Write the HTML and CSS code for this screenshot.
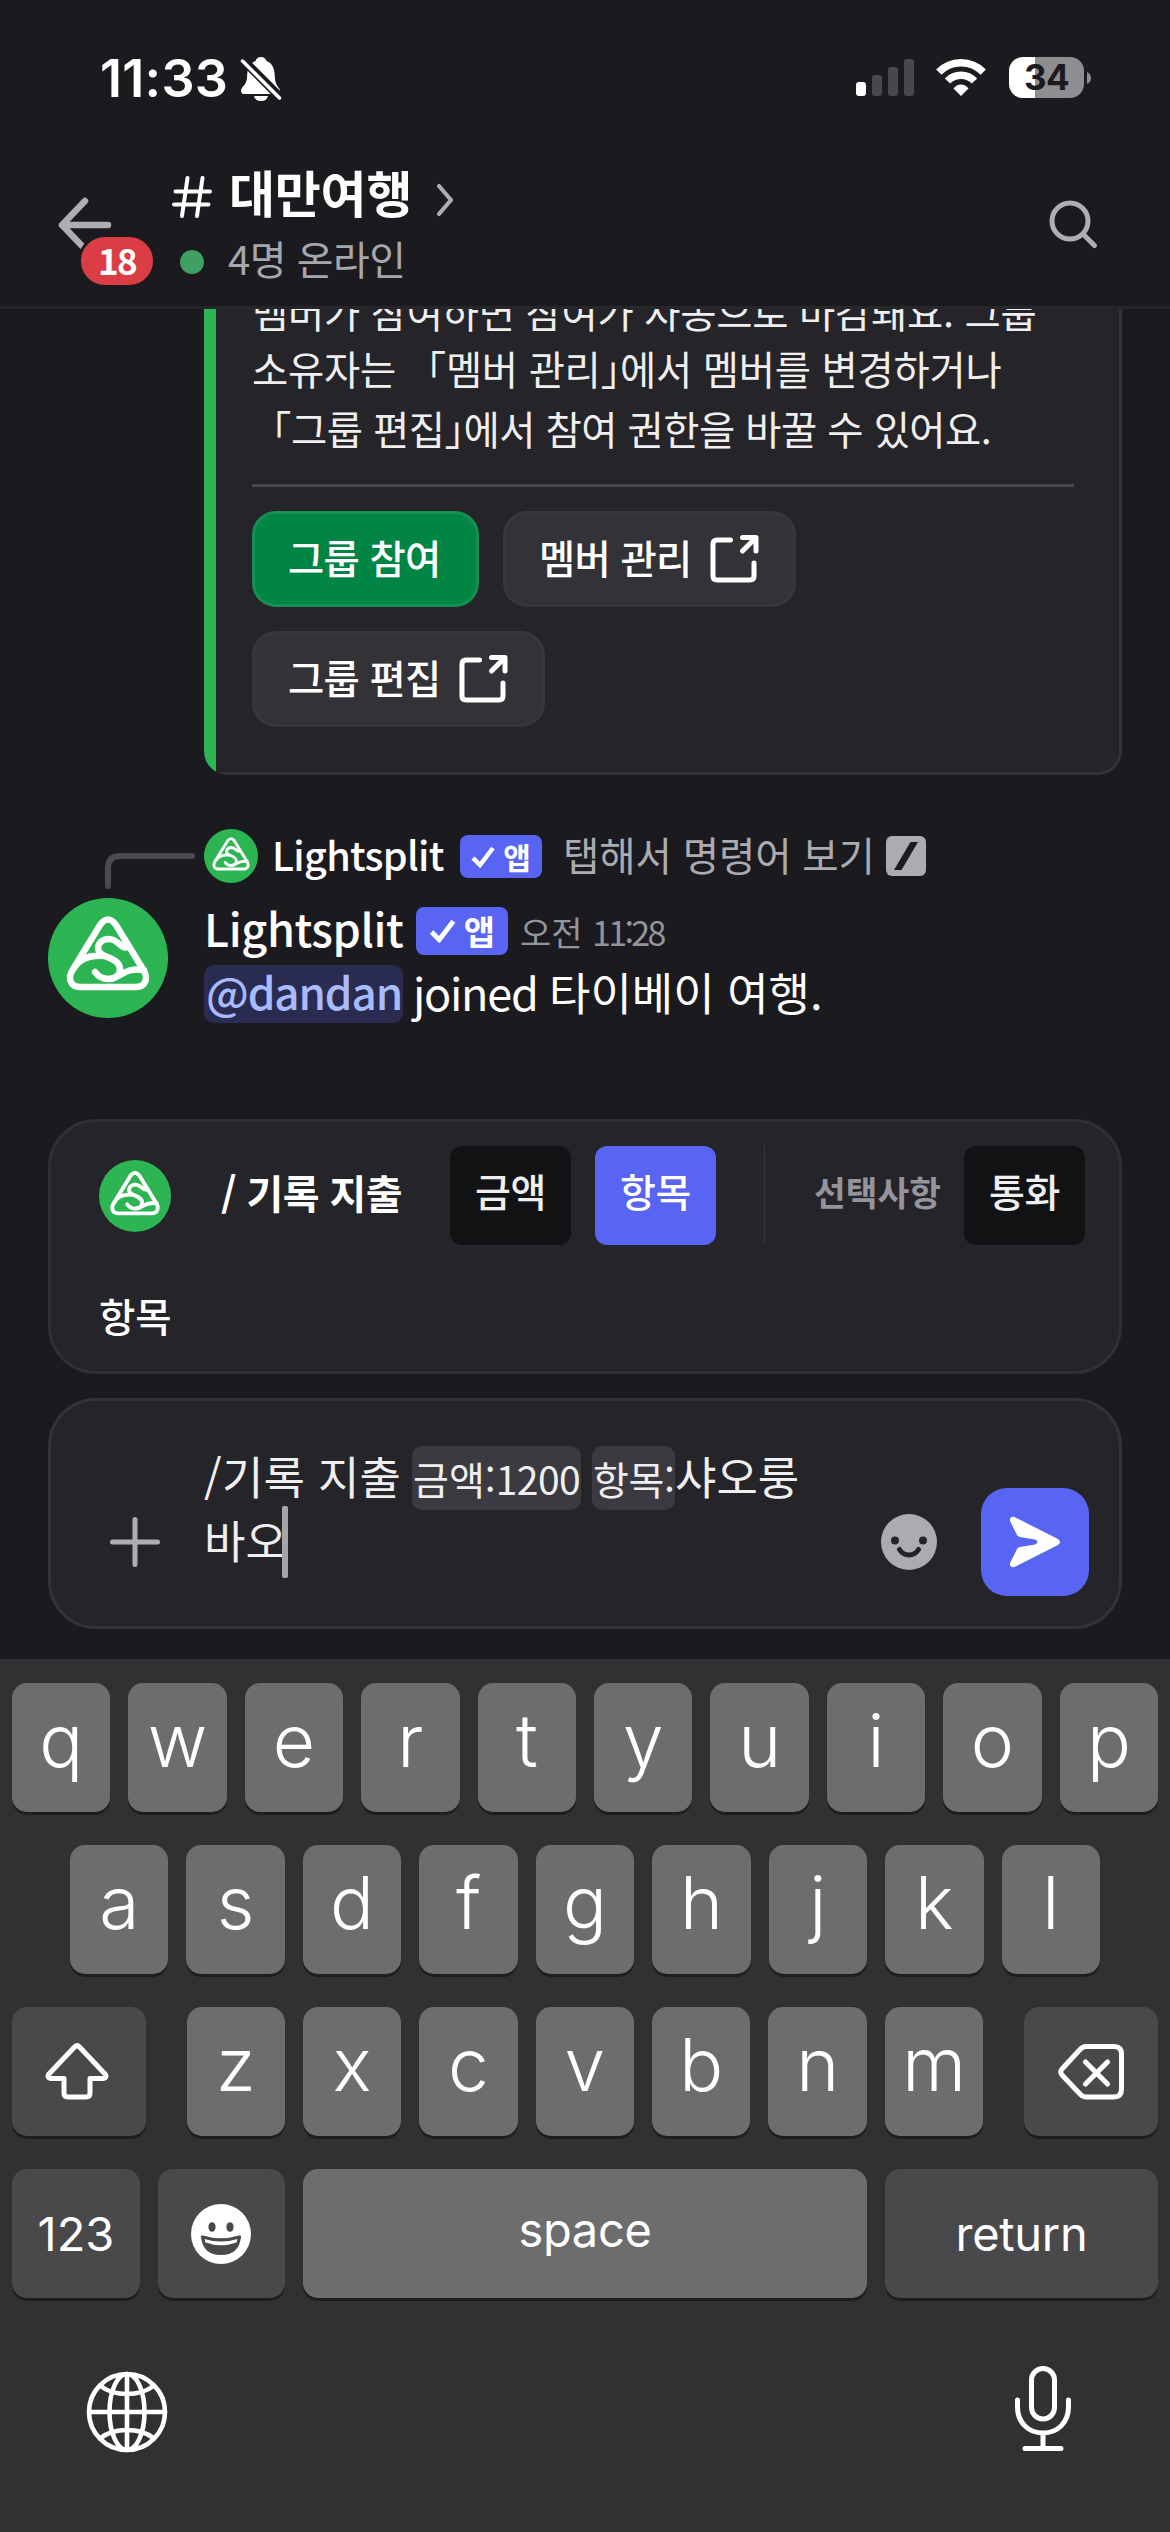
FILE: index.html
```html
<!DOCTYPE html>
<html lang="ko">
<head>
<meta charset="utf-8">
<title>대만여행</title>
<link rel="stylesheet" href="styles.css">
</head>
<body>
<svg class="defs" width="0" height="0">
  <symbol id="logo" viewBox="0 0 120 120">
    <circle cx="60" cy="60" r="60" fill="#2db553"/>
    <g fill="none" stroke="#fff" stroke-width="6.4" stroke-linecap="round" stroke-linejoin="round">
      <path d="M52 27Q60 16 68 27L96 73C101 82 96 89 88 89H32C24 89 19 82 24 73Z"/>
      <path d="M79 49C74 52 70 41 61 41C51 41 46 51 54 56.500C60 60 72 62 72 71C72 78 66 81 60 81C54 81 50 78 47 74"/>
      <path d="M26 70C33 58 45 57 56 58M62 81C73 80 76 69 96 72"/>
    </g>
  </symbol>
  <symbol id="external" viewBox="0 0 48 48">
    <g fill="none" stroke="#fff" stroke-width="5" stroke-linecap="round" stroke-linejoin="round">
      <path d="M20 5H6.500Q2.500 5 2.500 9V41Q2.500 45 6.500 45H39.500Q43.500 45 43.500 41V28"/>
      <path d="M32 2.500H45.500V16M44 4L32 16"/>
    </g>
  </symbol>
</svg>

<header class="top">
  <div class="status">
    <span class="clock">11:33</span>
    <svg class="bell" width="42" height="44" viewBox="0 0 42 44">
      <path fill="#fff" d="M21 0C24 0 26 2 26.500 4C32 6 34.500 11 34.700 18C35 27 37 28 39.500 32C41 35 39 37 37 37H5C1 37 0 34 2 31C5 27 7 26 7.200 18C7.500 11 10 6 15.500 4C16 2 18 0 21 0Z"/>
      <path fill="#fff" d="M14 39H28Q27 44 21 44Q15 44 14 39Z"/>
      <path stroke="#1b1a1f" stroke-width="9" d="M0 0L42 42"/>
      <path stroke="#fff" stroke-width="3.500" stroke-linecap="round" d="M2.500 4L39.500 41"/>
    </svg>
    <svg class="signal" width="58" height="37" viewBox="0 0 58 37">
      <rect x="0" y="23" width="10" height="14" rx="3" fill="#fff"/>
      <g fill="#48484b"><rect x="16" y="16" width="10" height="21" rx="3"/><rect x="32" y="8" width="10" height="29" rx="3"/><rect x="48" y="0" width="10" height="37" rx="3"/></g>
    </svg>
    <svg class="wifi" width="50" height="37" viewBox="0 0 50 37">
      <g fill="none" stroke="#fff" stroke-width="7.500"><path d="M2.800 13.200Q12 3.800 25 3.800Q38 3.800 47.200 13.200"/><path d="M11.500 22Q17 16.300 25 16.300Q33 16.300 38.500 22"/></g>
      <path fill="#fff" d="M17.500 29.500Q20.500 25.500 25 25.500Q29.500 25.500 32.500 29.500L25 37Z"/>
    </svg>
    <span class="battery">34</span>
    <svg class="tip" width="4" height="12" viewBox="0 0 4 12"><path d="M0 0Q4 2 4 6T0 12Z" fill="#8e8e90"/></svg>
  </div>
  <div class="channel">
    <div class="back">
      <svg width="54" height="52" viewBox="0 0 54 52" fill="none" stroke="#adaeb4" stroke-width="6.500" stroke-linecap="round" stroke-linejoin="round"><path d="M50 28H4L27 4M4 28L27 52"/></svg>
      <span class="unread">18</span>
    </div>
    <div class="names">
      <div class="title-row">
        <svg class="hash" width="40" height="42" viewBox="0 0 40 42" fill="none" stroke="#fff" stroke-width="4" stroke-linecap="round"><path d="M3.500 15.500H38M2 28.500H36.500M15.500 2L10 40M30.500 2L25 40"/></svg>
        <h1>대만여행</h1>
        <svg class="chevron" width="18" height="34" viewBox="0 0 18 34" fill="none" stroke="#adaeb4" stroke-width="4.200" stroke-linecap="round" stroke-linejoin="round"><path d="M3 3L15 17L3 31"/></svg>
      </div>
      <div class="online"><i></i><span>4명 온라인</span></div>
    </div>
    <svg class="search" width="50" height="50" viewBox="0 0 50 50" fill="none" stroke="#adaeb4" stroke-width="5" stroke-linecap="round"><circle cx="21" cy="21" r="18"/><path d="M34 34L45.500 45.500"/></svg>
  </div>
</header>

<main class="feed">
  <section class="embed">
    <div class="stripe"></div>
    <div class="embed-body">
      <p class="l1">멤버가 참여하면 참여가 자동으로 마감돼요. 그룹</p>
      <p class="l2">소유자는 「멤버 관리<span class="half">」</span>에서 멤버를 변경하거나</p>
      <p class="l3">「그룹 편집<span class="half">」</span>에서 참여 권한을 바꿀 수 있어요.</p>
      <hr>
      <div class="buttons">
        <button class="primary">그룹 참여</button>
        <button>멤버 관리<svg width="49" height="48"><use href="#external"/></svg></button>
        <button>그룹 편집<svg width="49" height="48"><use href="#external"/></svg></button>
      </div>
    </div>
  </section>

  <div class="reply">
    <svg class="spine" width="93" height="36" viewBox="0 0 93 36" fill="none" stroke="#4a4954" stroke-width="6" stroke-linecap="round"><path d="M3 33V15Q3 3 15 3H87"/></svg>
    <svg class="mini" width="54" height="54"><use href="#logo"/></svg>
    <b class="name">Lightsplit</b>
    <span class="app"><svg width="24" height="22" viewBox="0 0 24 22"><path d="M2 12L9 19L22 2" fill="none" stroke="#fff" stroke-width="4.500"/></svg>앱</span>
    <span class="hint">탭해서 명령어 보기</span>
    <svg class="slash" width="40" height="40" viewBox="0 0 40 40"><rect width="40" height="40" rx="6" fill="#abacb1"/><path d="M8 34L24.500 6H32L15.500 34Z" fill="#1b1a1f"/></svg>
  </div>

  <article class="message">
    <svg width="120" height="120"><use href="#logo"/></svg>
    <div class="content">
      <div class="author">
        <b class="name">Lightsplit</b>
        <span class="app"><svg width="27" height="24" viewBox="0 0 24 22"><path d="M2 12L9 19L22 2" fill="none" stroke="#fff" stroke-width="4.500"/></svg>앱</span>
        <time>오전 <span>11:28</span></time>
      </div>
      <p><span class="mention">@dandan</span><span class="joined">joined</span><span>타이베이 여행.</span></p>
    </div>
  </article>
</main>

<section class="command">
  <div class="params">
    <svg width="72" height="72"><use href="#logo"/></svg>
    <b class="cmd">/ 기록 지출</b>
    <span class="chip">금액</span>
    <span class="chip active">항목</span>
    <i></i>
    <span class="optional">선택사항</span>
    <span class="chip">통화</span>
  </div>
  <div class="desc">항목</div>
</section>

<section class="composer">
  <svg class="plus" width="50" height="50" viewBox="0 0 50 50" stroke="#adaeb4" stroke-width="5" stroke-linecap="round"><path d="M25 2.500V47.500M2.500 25H47.500"/></svg>
  <div class="draft">
    <div><span class="slashcmd">/기록 지출</span><span class="tag t1">금액:<span>1200</span></span><span class="tag t2">항목:</span><span>샤오룽</span></div>
    <div><span>바오</span><i class="caret"></i></div>
  </div>
  <svg class="smile" width="56" height="56" viewBox="0 0 56 56"><circle cx="28" cy="28" r="28" fill="#abacb1"/><g fill="#252429"><circle cx="14" cy="26.500" r="4"/><circle cx="42" cy="26.500" r="4"/></g><path d="M18.500 35.500Q22 41 28 41Q34 41 37.500 35.500" fill="none" stroke="#252429" stroke-width="5" stroke-linecap="round"/></svg>
  <button class="send"><svg width="52" height="52" viewBox="0 0 52 52"><path fill="#fff" d="M1.500 6C-.500 2 3 -.500 6.500 1.500L49 23Q53 26 49 29L6.500 50.500C3 52.500-.500 50 1.500 46L8 33Q8.500 31.500 11 31L26 28.500Q31 26 26 23.500L11 21Q8.500 20.500 8 19Z"/></svg></button>
</section>

<section class="keyboard">
  <div class="row"><kbd>q</kbd><kbd>w</kbd><kbd>e</kbd><kbd>r</kbd><kbd>t</kbd><kbd>y</kbd><kbd>u</kbd><kbd>i</kbd><kbd>o</kbd><kbd>p</kbd></div>
  <div class="row second"><kbd>a</kbd><kbd>s</kbd><kbd>d</kbd><kbd>f</kbd><kbd>g</kbd><kbd>h</kbd><kbd>j</kbd><kbd>k</kbd><kbd>l</kbd></div>
  <div class="row third">
    <kbd class="fn shift"><svg width="64" height="57" viewBox="0 0 64 57" fill="none" stroke="#fff" stroke-width="5" stroke-linejoin="round"><path d="M29.500 4Q32 1.500 34.500 4L60.500 31.500Q62 35 58.500 35.500H45V50Q45 54 41 54H23Q19 54 19 50V35.500H5.500Q2 35 3.500 31.500Z"/></svg></kbd>
    <kbd>z</kbd><kbd>x</kbd><kbd>c</kbd><kbd>v</kbd><kbd>b</kbd><kbd>n</kbd><kbd>m</kbd>
    <kbd class="fn del"><svg width="66" height="56" viewBox="0 0 66 56" fill="none" stroke="#fff" stroke-width="5" stroke-linecap="round" stroke-linejoin="round"><path d="M28 2.500H56Q63.500 2.500 63.500 10V45Q63.500 53 56 53H28Q25 53 22 50L4 31Q1.500 28 4 25L22 5.500Q25 2.500 28 2.500ZM27.500 18L49.500 40M49.500 18L27.500 40"/></svg></kbd>
  </div>
  <div class="row last">
    <kbd class="fn num">123</kbd>
    <kbd class="fn emoji"><svg width="60" height="60" viewBox="0 0 60 60"><circle cx="30" cy="30" r="30" fill="#fff"/><g fill="#49494b"><ellipse cx="21" cy="23" rx="3.600" ry="4.800"/><ellipse cx="39" cy="23" rx="3.600" ry="4.800"/><path d="M10 33Q9 31 12 31.500Q30 37 48 31.500Q51 31 50 33Q48 51 30 51Q12 51 10 33Z"/></g><path d="M13.500 35Q30 40 46.500 35L45.500 38.500Q30 44 14.500 38.500Z" fill="#fff"/></svg></kbd>
    <kbd class="space">space</kbd>
    <kbd class="fn ret">return</kbd>
  </div>
  <div class="bottom">
    <svg width="82" height="82" viewBox="0 0 82 82" fill="none" stroke="#fff" stroke-width="4.600"><circle cx="41" cy="41" r="38"/><ellipse cx="41" cy="41" rx="17.500" ry="38"/><path d="M41 3V79M3 41H79M14.500 15Q25 23 41 23T67.500 15M14.500 67Q25 59 41 59T67.500 67"/></svg>
    <svg class="mic" width="56" height="86" viewBox="0 0 56 86" fill="none" stroke="#fff" stroke-width="5" stroke-linecap="round"><rect x="16.500" y="2.500" width="23" height="50.500" rx="11.500"/><path d="M2.500 34V41C2.500 56 13 67 28 67S53.500 56 53.500 41V34M28 67V82.500M10 82.500H46"/></svg>
  </div>
</section>
</body>
</html>
```
FILE: styles.css
```css
* { box-sizing: border-box; margin: 0; padding: 0; }
body {
  width: 1170px; height: 2532px; overflow: hidden;
  display: flex; flex-direction: column;
  background: #1b1a1f; color: #fff;
  font-family: "Noto Sans CJK KR", sans-serif;
  white-space: nowrap;
}
svg { display: block; flex: none; }
.defs { position: absolute; }
button { font: inherit; color: inherit; border: 0; letter-spacing: inherit; }

/* header */
.top { height: 309px; flex: none; border-bottom: 3px solid #27272b; }
.status { display: flex; align-items: flex-start; height: 160px; padding: 57px 0 0 100px; font-family: Inter, sans-serif; }
.clock { width: 140px; font-size: 52px; font-weight: 600; line-height: 43px; letter-spacing: 0.3px; }
.bell { margin-right: 574px; }
.signal { margin: 2px 22px 0 0; }
.wifi { margin: 2px 23px 0 0; }
.battery { width: 75px; height: 41px; border-radius: 14px; background: linear-gradient(90deg, #fff 26px, #8e8e90 26px); color: #1b1a1f; font-size: 35px; font-weight: 700; line-height: 41px; text-align: center; letter-spacing: -0.6px; }
.tip { margin: 15px 0 0 3px; }
.channel { display: flex; align-items: flex-start; }
.back { position: relative; width: 110px; height: 130px; margin: 37px 4px 0 58px; }
.unread { position: absolute; left: 20px; top: 37px; width: 78px; height: 54px; border: 3px solid #1b1a1f; border-radius: 27px; background: #da3e44; font-size: 35px; font-weight: 700; line-height: 45px; text-align: center; letter-spacing: -1.6px; }
.names { width: 877px; }
.title-row { display: flex; align-items: flex-start; height: 72px; }
.hash { margin: 16px 17px 0 0; }
h1 { width: 207px; font-size: 50px; line-height: 63px; font-weight: 700; letter-spacing: -0.2px; }
.chevron { margin-top: 23px; }
.online { display: flex; align-items: flex-start; padding: 0 0 0 8px; color: #a6a7ad; font-size: 40px; line-height: 53px; letter-spacing: -0.5px; }
.online i { width: 24px; height: 24px; border-radius: 50%; background: #3fa063; margin: 18px 24px 0 0; }
.search { margin-top: 40px; }

/* feed */
.feed { height: 810px; flex: none; overflow: hidden; display: flex; flex-direction: column; justify-content: flex-end; padding-bottom: 96px; }
.embed { display: flex; flex: none; width: 918px; margin: 0 0 54px 204px; border-radius: 24px; overflow: hidden; }
.stripe { width: 12px; background: #2db553; }
.embed-body { flex: 1; padding: 0 45px 45px 36px; background: #252429; border: 3px solid #333237; border-left: 0; border-radius: 0 0 24px 0; color: #efeff0; font-size: 39.400px; letter-spacing: -0.25px; }
.embed-body p { line-height: 60px; }
.embed-body .l1 { margin-bottom: -3px; }
.embed-body .l3 { letter-spacing: -0.5px; }
.half { font-feature-settings: "halt"; }
hr { border: 0; height: 3px; background: #48474c; margin: 26px 0 24px; }
.buttons { display: flex; flex-wrap: wrap; gap: 24px; color: #fff; font-weight: 500; letter-spacing: -0.7px; }
.buttons button { display: flex; align-items: center; width: 293px; height: 96px; padding: 0 0 6px 33px; border: 3px solid #37363b; border-radius: 24px; background: #333237; }
.buttons button svg { margin: 5px 0 0 18px; }
.buttons .primary { width: 227px; background: #008545; border-color: #158f54; }

.reply { display: flex; align-items: flex-start; flex: none; height: 54px; padding-left: 105px; margin-bottom: 15px; }
.spine { margin: 24px 6px 0 0; }
.reply .name { width: 188px; margin-left: 14px; font-size: 39.500px; line-height: 50px; font-weight: 500; letter-spacing: -0.7px; }
.app { display: flex; align-items: center; justify-content: center; gap: 8px; border-radius: 8px; background: #5865f2; font-weight: 700; }
.reply .app { width: 82px; height: 43px; margin: 6px 21px 0 0; font-size: 30px; line-height: 39px; }
.hint { width: 323px; color: #abacb1; font-size: 39.500px; line-height: 49px; letter-spacing: -0.1px; }
.slash { margin-top: 7px; }

.message { display: flex; flex: none; padding-left: 48px; }
.content { margin-left: 36px; padding-top: 9px; height: 125px; }
.author { display: flex; align-items: flex-start; height: 58px; }
.author .name { width: 212px; font-size: 45px; line-height: 42px; font-weight: 500; letter-spacing: -0.4px; }
.author .app { width: 92px; height: 48px; margin-right: 12px; font-size: 34px; line-height: 44px; }
time { font-size: 34px; line-height: 50px; color: #94959c; }
time span { letter-spacing: -2.700px; }
.message p { display: flex; align-items: flex-start; font-size: 45px; line-height: 53px; }
.mention { width: 199px; height: 58px; padding-left: 2px; border-radius: 10px; background: #292b50; color: #a9bbff; font-size: 44px; font-weight: 500; letter-spacing: -1.1px; }
.joined { width: 136px; margin-left: 10px; letter-spacing: -1.3px; }

/* command panel */
.command, .composer { flex: none; width: 1074px; margin-left: 48px; border: 3px solid #302f34; border-radius: 48px; background: #252429; }
.command { height: 255px; }
.params { display: flex; align-items: flex-start; height: 148px; padding: 24px 0 0 48px; border-bottom: 1px solid #28272c; }
.params svg { margin: 14px 50px 0 0; }
.cmd { width: 229px; font-size: 40px; font-weight: 700; line-height: 92px; letter-spacing: -0.6px; }
.chip { width: 121px; height: 99px; margin-right: 24px; border-radius: 12px; background: #111214; font-size: 39px; font-weight: 500; line-height: 88px; text-align: center; color: #efeff0; letter-spacing: -0.4px; }
.chip.active { background: #5865f2; color: #fff; }
.params i { width: 1px; height: 99px; margin: 0 49px 0 24px; background: #38373c; }
.optional { width: 150px; color: #94959c; font-size: 34.500px; font-weight: 700; line-height: 90px; }
.desc { padding-left: 48px; font-size: 39.500px; font-weight: 500; line-height: 90px; }

.composer { display: flex; align-items: flex-start; height: 231px; margin-top: 24px; border-color: #333237; }
.plus { margin: 116px 44px 0 59px; }
.draft { width: 677px; padding-top: 45px; color: #efeff0; font-size: 45px; }
.draft > div { display: flex; align-items: flex-start; height: 64px; line-height: 60px; }
.slashcmd { width: 208px; letter-spacing: 0.2px; }
.tag { height: 64px; border-radius: 10px; background: #3b3a40; font-size: 39px; line-height: 64px; padding-left: 1px; }
.t1 { width: 169px; margin-right: 11px; }
.t1 span { letter-spacing: -0.500px; }
.t2 { width: 83px; letter-spacing: -0.4px; }
.caret { width: 6px; height: 72px; margin: -4px 0 0 -5px; border-radius: 2px; background: #a6a6aa; }
.smile { margin: 113px 44px 0 0; }
.send { width: 108px; height: 108px; margin-top: 87px; border-radius: 26px; background: #5865f2; display: flex; align-items: center; justify-content: center; }

/* keyboard */
.keyboard { height: 873px; margin-top: 30px; padding: 24px 12px 0; background: #313133; font-family: Inter, sans-serif; }
.row { display: flex; gap: 18px; height: 129px; margin-bottom: 33px; }
kbd { flex: 1 1 0; height: 129px; border-radius: 15px; background: #6d6d6e; box-shadow: 0 3px 0 #1e1e1f; font: 300 73px/115px Inter, sans-serif; text-align: center; }
.fn { background: #49494b; display: flex; align-items: center; justify-content: center; }
.second { padding: 0 58px; }
.third kbd { flex: none; width: 98.400px; }
.third .fn { width: 133.500px; }
.shift { margin-right: 23px; padding-right: 3px; }
.del { margin-left: 23px; }
.last kbd { flex: none; font-size: 47px; font-weight: 400; line-height: 129px; }
.last .num { width: 128px; }
.last .emoji { width: 127px; padding-right: 2px; }
.last .space { width: 564px; line-height: 121px; letter-spacing: -0.3px; }
.last .ret { width: 273px; letter-spacing: -0.3px; }
.bottom { display: flex; justify-content: space-between; padding: 40px 99px 0 86px; margin: 0 -12px; }
.mic { margin-top: -5px; }
```
